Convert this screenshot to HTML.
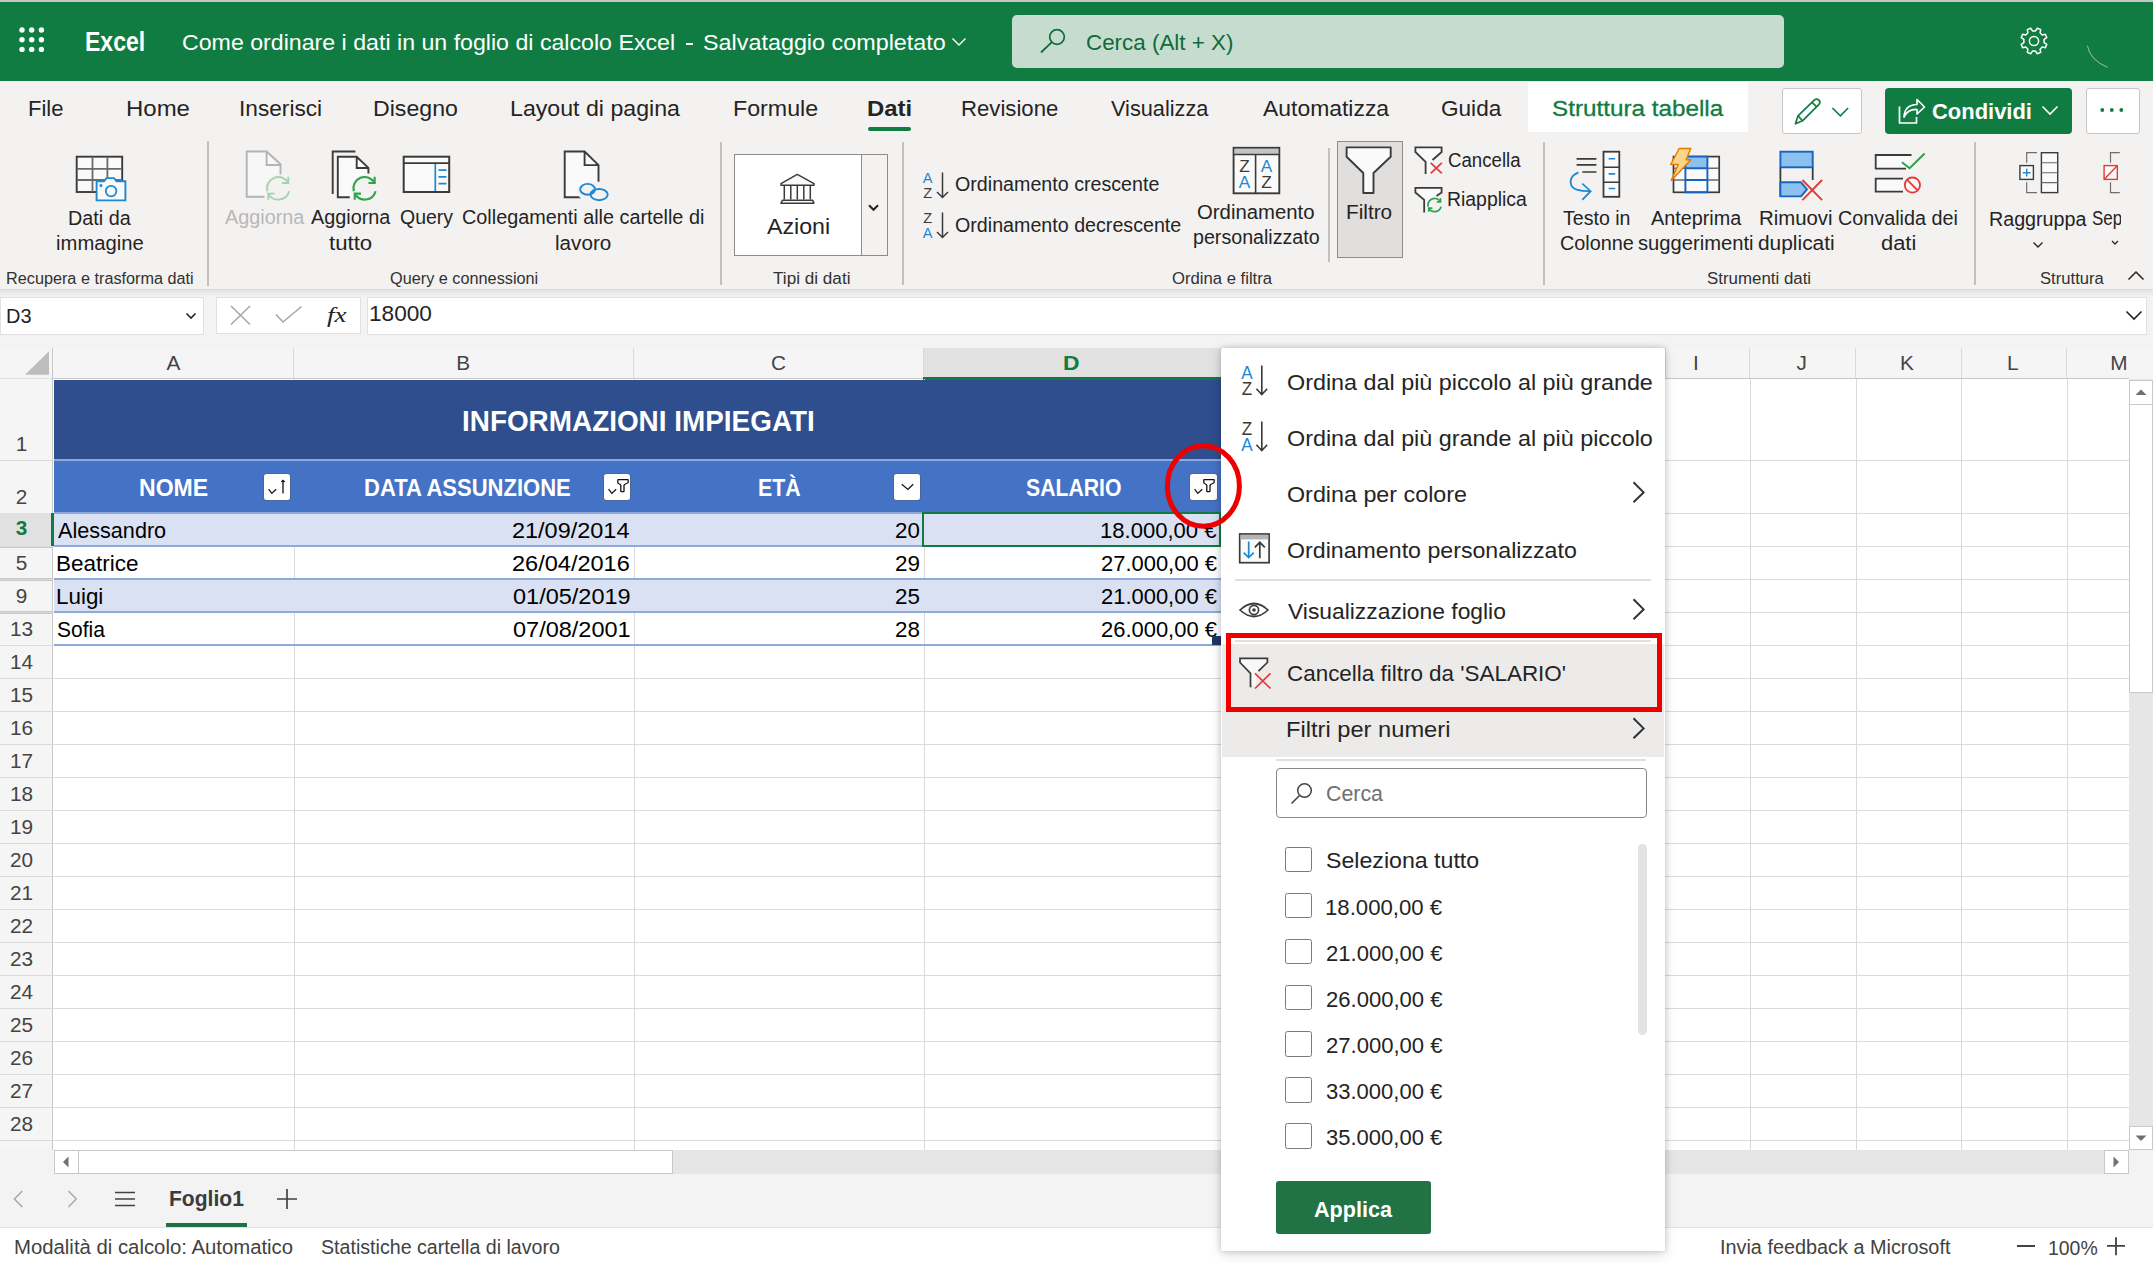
<!DOCTYPE html>
<html><head><meta charset="utf-8"><title>Excel</title>
<style>
html,body{margin:0;padding:0;}
body{width:2153px;height:1263px;overflow:hidden;position:relative;background:#f3f2f1;font-family:"Liberation Sans",sans-serif;}
.b{position:absolute;display:block;}
.t{position:absolute;white-space:nowrap;transform-origin:0 0;font-family:"Liberation Sans",sans-serif;}
</style></head><body>
<div class="b" style="left:0px;top:0px;width:2153px;height:2px;background:#c6c6c6;"></div>
<div class="b" style="left:0px;top:2px;width:2153px;height:79px;background:#107c41;"></div>
<svg class="b" style="left:16px;top:24.4px;" width="32" height="32" viewBox="0 0 32 32"><circle cx="6" cy="6" r="2.7" fill="#fff"/><circle cx="6" cy="15.7" r="2.7" fill="#fff"/><circle cx="6" cy="25.4" r="2.7" fill="#fff"/><circle cx="15.7" cy="6" r="2.7" fill="#fff"/><circle cx="15.7" cy="15.7" r="2.7" fill="#fff"/><circle cx="15.7" cy="25.4" r="2.7" fill="#fff"/><circle cx="25.4" cy="6" r="2.7" fill="#fff"/><circle cx="25.4" cy="15.7" r="2.7" fill="#fff"/><circle cx="25.4" cy="25.4" r="2.7" fill="#fff"/></svg>
<div class="t" style="left:85.46px;top:29.22px;font-size:26.89px;line-height:26.89px;color:#fff;font-weight:700;transform:scaleX(0.8565);font-family:'Liberation Sans', sans-serif;">Excel</div>
<div class="t" style="left:181.82px;top:32.04px;font-size:22.38px;line-height:22.38px;color:#fff;transform:scaleX(1.0351);font-family:'Liberation Sans', sans-serif;">Come ordinare i dati in un foglio di calcolo Excel</div>
<div class="b" style="left:686px;top:43.3px;width:7px;height:1.5px;background:#fff;"></div>
<div class="t" style="left:703.13px;top:32.04px;font-size:22.38px;line-height:22.38px;color:#fff;transform:scaleX(1.0437);font-family:'Liberation Sans', sans-serif;">Salvataggio completato</div>
<svg class="b" style="left:950px;top:36px;" width="18" height="12" viewBox="0 0 18 12"><path d="M2.5 2.5 L9 9 L15.5 2.5" stroke="#fff" stroke-width="1.4" fill="none"/></svg>
<div class="b" style="left:1012px;top:15px;width:772px;height:53px;background:#c6dccf;border-radius:5px;"></div>
<svg class="b" style="left:1036px;top:25px;" width="32" height="32" viewBox="0 0 32 32"><circle cx="21" cy="12" r="7.3" stroke="#0e6e3a" stroke-width="1.7" fill="none"/><path d="M15.8 17.2 L5 27.5" stroke="#0e6e3a" stroke-width="1.8" fill="none"/></svg>
<div class="t" style="left:1085.86px;top:32.58px;font-size:21.51px;line-height:21.51px;color:#0f6b39;transform:scaleX(1.0415);font-family:'Liberation Sans', sans-serif;">Cerca (Alt + X)</div>
<svg class="b" style="left:2018px;top:25px;" width="32" height="32" viewBox="0 0 32 32"><path d="M17.51 5.91 L19.31 3.22 L22.70 4.63 L22.07 7.80 L24.20 9.93 L27.37 9.30 L28.78 12.69 L26.09 14.49 L26.09 17.51 L28.78 19.31 L27.37 22.70 L24.20 22.07 L22.07 24.20 L22.70 27.37 L19.31 28.78 L17.51 26.09 L14.49 26.09 L12.69 28.78 L9.30 27.37 L9.93 24.20 L7.80 22.07 L4.63 22.70 L3.22 19.31 L5.91 17.51 L5.91 14.49 L3.22 12.69 L4.63 9.30 L7.80 9.93 L9.93 7.80 L9.30 4.63 L12.69 3.22 L14.49 5.91 Z" fill="none" stroke="#fff" stroke-width="1.5" stroke-linejoin="round"/><circle cx="16" cy="16" r="4.6" fill="none" stroke="#fff" stroke-width="1.5"/></svg>
<svg class="b" style="left:2080px;top:30px;" width="40" height="45" viewBox="0 0 40 45"><path d="M7.4 15.7 Q10 30 27.6 37.4" stroke="#ffffff" stroke-width="1" fill="none" opacity="0.55"/></svg>
<div class="b" style="left:0px;top:81px;width:2153px;height:60px;background:#f3f2f1;"></div>
<div class="t" style="left:28.19px;top:96.85px;font-size:22.97px;line-height:22.97px;color:#242424;transform:scaleX(0.9589);font-family:'Liberation Sans', sans-serif;">File</div>
<div class="t" style="left:125.73px;top:96.85px;font-size:22.97px;line-height:22.97px;color:#242424;transform:scaleX(1.0436);font-family:'Liberation Sans', sans-serif;">Home</div>
<div class="t" style="left:239.42px;top:96.85px;font-size:22.97px;line-height:22.97px;color:#242424;transform:scaleX(0.9868);font-family:'Liberation Sans', sans-serif;">Inserisci</div>
<div class="t" style="left:373.10px;top:96.85px;font-size:22.97px;line-height:22.97px;color:#242424;transform:scaleX(1.0072);font-family:'Liberation Sans', sans-serif;">Disegno</div>
<div class="t" style="left:510.10px;top:96.85px;font-size:22.97px;line-height:22.97px;color:#242424;transform:scaleX(1.0081);font-family:'Liberation Sans', sans-serif;">Layout di pagina</div>
<div class="t" style="left:732.60px;top:96.85px;font-size:22.97px;line-height:22.97px;color:#242424;transform:scaleX(1.0108);font-family:'Liberation Sans', sans-serif;">Formule</div>
<div class="t" style="left:961.18px;top:96.85px;font-size:22.97px;line-height:22.97px;color:#242424;transform:scaleX(0.9648);font-family:'Liberation Sans', sans-serif;">Revisione</div>
<div class="t" style="left:1111.49px;top:96.85px;font-size:22.97px;line-height:22.97px;color:#242424;transform:scaleX(0.9459);font-family:'Liberation Sans', sans-serif;">Visualizza</div>
<div class="t" style="left:1262.95px;top:96.85px;font-size:22.97px;line-height:22.97px;color:#242424;transform:scaleX(0.9976);font-family:'Liberation Sans', sans-serif;">Automatizza</div>
<div class="t" style="left:1441.47px;top:96.85px;font-size:22.97px;line-height:22.97px;color:#242424;transform:scaleX(0.9830);font-family:'Liberation Sans', sans-serif;">Guida</div>
<div class="t" style="left:867.20px;top:96.85px;font-size:22.97px;line-height:22.97px;color:#242424;font-weight:700;transform:scaleX(1.0395);font-family:'Liberation Sans', sans-serif;">Dati</div>
<div class="b" style="left:868px;top:127px;width:43px;height:4px;background:#107c41;border-radius:2px;"></div>
<div class="b" style="left:1528px;top:82px;width:220px;height:50px;background:#ffffff;"></div>
<div class="t" style="left:1551.68px;top:96.85px;font-size:22.97px;line-height:22.97px;color:#107c41;transform:scaleX(1.0555);font-family:'Liberation Sans', sans-serif;-webkit-text-stroke:0.3px #107c41;">Struttura tabella</div>
<div class="b" style="left:1781.5px;top:88px;width:80.5px;height:46px;background:#fff;border:1px solid #c8c6c4;border-radius:3px;box-sizing:border-box;"></div>
<svg class="b" style="left:1790px;top:96px;" width="64" height="32" viewBox="0 0 64 32"><g fill="none" stroke="#107c41" stroke-width="1.7" stroke-linejoin="round"><path d="M5.5 27.8 L8 19.8 L24.5 3.8 Q27 2.1 29 4.1 Q30.8 6.1 29 8.3 L12.5 24.8 Z"/><path d="M8 19.8 L12.5 24.8 M22 6.3 L26.8 10.9"/></g><path d="M42.4 12 L50.4 19.9 L58.1 12" stroke="#107c41" stroke-width="1.6" fill="none"/></svg>
<div class="b" style="left:1885px;top:88px;width:187px;height:46px;background:#107c41;border-radius:4px;"></div>
<svg class="b" style="left:1893.5px;top:94.8px;" width="36" height="34" viewBox="0 0 36 34"><g fill="none" stroke="#fff" stroke-width="1.7" stroke-linejoin="round"><path d="M5.5 11.5 L5.5 28 L22.5 28 L22.5 22"/><path d="M10 22 Q10.5 10 23 9.5 L23 4.5 L30.5 12 L23 19 L23 14.5 Q14 14 10 22 Z"/></g></svg>
<div class="t" style="left:1931.60px;top:100.64px;font-size:22.38px;line-height:22.38px;color:#fff;font-weight:700;transform:scaleX(0.9804);font-family:'Liberation Sans', sans-serif;">Condividi</div>
<svg class="b" style="left:2038px;top:100px;" width="24" height="20" viewBox="0 0 24 20"><path d="M4.5 6.5 L12 14 L19.5 6.5" stroke="#fff" stroke-width="1.6" fill="none"/></svg>
<div class="b" style="left:2085.5px;top:88px;width:54.5px;height:46px;background:#fff;border:1px solid #c8c6c4;border-radius:3px;box-sizing:border-box;"></div>
<svg class="b" style="left:2095px;top:104px;" width="36" height="12" viewBox="0 0 36 12"><circle cx="7.3" cy="6" r="1.9" fill="#107c41"/><circle cx="16.8" cy="6" r="1.9" fill="#107c41"/><circle cx="26.3" cy="6" r="1.9" fill="#107c41"/></svg>
<div class="b" style="left:0px;top:141px;width:2153px;height:148px;background:#f3f2f1;"></div>
<div class="b" style="left:0px;top:289px;width:2153px;height:1px;background:#dcdad8;"></div>
<div class="b" style="left:0px;top:290px;width:2153px;height:7px;background:transparent;background:linear-gradient(rgba(0,0,0,0.07),rgba(0,0,0,0));z-index:5;"></div>
<div class="b" style="left:206.8px;top:141px;width:1.799999999999983px;height:145px;background:#c3c1bf;"></div>
<div class="b" style="left:719.8px;top:142px;width:1.8000000000000682px;height:143px;background:#c3c1bf;"></div>
<div class="b" style="left:901.8px;top:142px;width:1.8000000000000682px;height:143px;background:#c3c1bf;"></div>
<div class="b" style="left:1542.8px;top:142px;width:1.7999999999999545px;height:143px;background:#c3c1bf;"></div>
<div class="b" style="left:1973.8px;top:142px;width:1.7999999999999545px;height:143px;background:#c3c1bf;"></div>
<div class="b" style="left:1328.3px;top:148px;width:1.7999999999999545px;height:114px;background:#c3c1bf;"></div>
<div class="t" style="left:6.17px;top:269.59px;font-size:16.42px;line-height:16.42px;color:#323130;transform:scaleX(0.9897);font-family:'Liberation Sans', sans-serif;">Recupera e trasforma dati</div>
<div class="t" style="left:389.74px;top:269.59px;font-size:16.42px;line-height:16.42px;color:#323130;transform:scaleX(0.9909);font-family:'Liberation Sans', sans-serif;">Query e connessioni</div>
<div class="t" style="left:772.62px;top:269.59px;font-size:16.42px;line-height:16.42px;color:#323130;transform:scaleX(1.0443);font-family:'Liberation Sans', sans-serif;">Tipi di dati</div>
<div class="t" style="left:1172.22px;top:269.59px;font-size:16.42px;line-height:16.42px;color:#323130;transform:scaleX(1.0163);font-family:'Liberation Sans', sans-serif;">Ordina e filtra</div>
<div class="t" style="left:1706.92px;top:269.59px;font-size:16.42px;line-height:16.42px;color:#323130;transform:scaleX(1.0285);font-family:'Liberation Sans', sans-serif;">Strumenti dati</div>
<div class="t" style="left:2039.63px;top:269.59px;font-size:16.42px;line-height:16.42px;color:#323130;transform:scaleX(1.0139);font-family:'Liberation Sans', sans-serif;">Struttura</div>
<svg class="b" style="left:2124px;top:266px;" width="24" height="20" viewBox="0 0 24 20"><path d="M4.5 13.5 L12 6 L19.5 13.5" stroke="#242424" stroke-width="1.5" fill="none"/></svg>
<div class="b" style="left:734px;top:154px;width:154px;height:102px;background:#ffffff;border:1px solid #8f8d8b;box-sizing:border-box;"></div>
<div class="b" style="left:861.5px;top:155px;width:25.5px;height:100px;background:#f3f2f1;"></div>
<div class="b" style="left:860.8px;top:155px;width:1.400000000000091px;height:100px;background:#8f8d8b;"></div>
<svg class="b" style="left:864px;top:199px;" width="18" height="18" viewBox="0 0 18 18"><path d="M5 6.3 L9.5 10.8 L14 6.3" stroke="#242424" stroke-width="2" fill="none"/></svg>
<div class="b" style="left:1337px;top:141px;width:66px;height:117px;background:#e1dfdd;border:1px solid #8f8d8b;box-sizing:border-box;"></div>
<svg class="b" style="left:0px;top:0px;" width="2153" height="300" viewBox="0 0 2153 300"><rect x="76.7" y="156.7" width="45.5" height="35.3" fill="#fafafa" stroke="#3b3b3b" stroke-width="1.9"/><path d="M92.5 157 V192 M107.4 157 V192 M77 168.8 H122 M77 180 H122" stroke="#6a6a6a" stroke-width="1.8"/><path d="M96.6 181.2 H104 L106.5 178.1 H114 L116.5 181.2 H125.4 V200.4 H96.6 Z" fill="#fafafa" stroke="#1e88d4" stroke-width="1.9"/><circle cx="111.1" cy="191.1" r="5.3" fill="none" stroke="#1e88d4" stroke-width="1.8"/><rect x="99.6" y="184.2" width="2.7" height="2.7" fill="#1e88d4"/><path d="M246.7 151.5 H266.6 L280.5 164.2 V196.7 H246.7 Z" fill="#f7f7f7"/><path d="M264.4 196.7 H246.7 V151.5 H266.6 L280.5 164.2 V174.4 M266.6 151.5 V165 H280.5" stroke="#b3b3b3" stroke-width="1.9" fill="none"/><circle cx="278.3" cy="188.3" r="13.5" fill="#f3f2f1"/><path d="M267.39 191.22 A11.3 11.3 0 0 1 288.28 182.99" stroke="#a3d4b0" stroke-width="1.9" fill="none"/><path d="M289.21 191.22 A11.3 11.3 0 0 1 268.32 193.61" stroke="#a3d4b0" stroke-width="1.9" fill="none"/><path d="M288.28 176.78 V182.99 H282.06" stroke="#a3d4b0" stroke-width="1.9" fill="none"/><path d="M268.32 199.82 V193.61 H274.54" stroke="#a3d4b0" stroke-width="1.9" fill="none"/><path d="M332.7 193.9 V151.5 H355.4" stroke="#3b3b3b" stroke-width="1.9" fill="none"/><path d="M337.8 156.7 H356.7 L368.4 167.9 V197.2 H337.8 Z" fill="#fafafa"/><path d="M349.8 197.2 H337.8 V156.7 H356.7 L368.4 167.9 V173.4 M356.7 156.7 V168 H368.4" stroke="#3b3b3b" stroke-width="1.9" fill="none"/><circle cx="364.7" cy="188.3" r="13.5" fill="#f3f2f1"/><path d="M353.79 191.22 A11.3 11.3 0 0 1 374.68 182.99" stroke="#2da44e" stroke-width="2.1" fill="none"/><path d="M375.61 191.22 A11.3 11.3 0 0 1 354.72 193.61" stroke="#2da44e" stroke-width="2.1" fill="none"/><path d="M374.68 176.78 V182.99 H368.46" stroke="#2da44e" stroke-width="2.1" fill="none"/><path d="M354.72 199.82 V193.61 H360.94" stroke="#2da44e" stroke-width="2.1" fill="none"/><rect x="403.7" y="156.7" width="45.5" height="35.3" fill="#fafafa" stroke="#3b3b3b" stroke-width="2"/><path d="M404 163.2 H449" stroke="#3b3b3b" stroke-width="1.7"/><path d="M435.3 164 V191 M438.5 170.1 H446.5 M438.5 176.8 H446.5 M438.5 183.7 H446.5" stroke="#1e88d4" stroke-width="1.7"/><path d="M564.7 151.5 H584.6 L598.5 165.1 V197.2 H564.7 Z" fill="#fafafa"/><path d="M580.9 197.2 H564.7 V151.5 H584.6 L598.5 165.1 V181.8 M584.6 151.5 V165.1 H598.5" stroke="#3b3b3b" stroke-width="1.9" fill="none"/><ellipse cx="592" cy="191.5" rx="15" ry="10" fill="#f3f2f1"/><ellipse cx="587.6" cy="189.3" rx="7.4" ry="5.4" fill="none" stroke="#1e88d4" stroke-width="1.9"/><ellipse cx="599.1" cy="194.6" rx="8.6" ry="5.6" fill="none" stroke="#1e88d4" stroke-width="1.9"/><g stroke="#3b3b3b" stroke-width="1.5" fill="#fafafa" stroke-linejoin="round"><path d="M781 183.7 L797.3 174.4 L814 183.7 V185.3 H781 Z"/><path d="M784.3 185.5 V199.5 M790.8 185.5 V199.5 M797.3 185.5 V199.5 M803.8 185.5 V199.5 M810.3 185.5 V199.5"/><path d="M782.5 200.2 H812.5 L814 203.2 H781 Z"/></g><text x="927.6" y="182.7" font-family="Liberation Sans" font-size="14.6" fill="#1e88d4" text-anchor="middle">A</text><text x="927.6" y="197.6" font-family="Liberation Sans" font-size="14.6" fill="#3b3b3b" text-anchor="middle">Z</text><path d="M942.5 172.5 V197.5 M937 192.0 L942.5 197.5 L948 192.0" stroke="#3b3b3b" stroke-width="1.5" fill="none"/><text x="927.6" y="222.7" font-family="Liberation Sans" font-size="14.6" fill="#3b3b3b" text-anchor="middle">Z</text><text x="927.6" y="237.6" font-family="Liberation Sans" font-size="14.6" fill="#1e88d4" text-anchor="middle">A</text><path d="M942.5 212.5 V237.5 M937 232.0 L942.5 237.5 L948 232.0" stroke="#3b3b3b" stroke-width="1.5" fill="none"/><rect x="1233.6" y="147.8" width="45.7" height="45.5" fill="#fafafa" stroke="#3b3b3b" stroke-width="1.9"/><rect x="1234.6" y="148.8" width="43.7" height="5.4" fill="#c4c4c4"/><path d="M1234 154.5 H1279 M1255.6 154.5 V193" stroke="#3b3b3b" stroke-width="1.6"/><text x="1244.4" y="171.6" font-family="Liberation Sans" font-size="17.2" fill="#3b3b3b" text-anchor="middle">Z</text><text x="1244.4" y="188.3" font-family="Liberation Sans" font-size="17.2" fill="#1e88d4" text-anchor="middle">A</text><text x="1266.6" y="171.6" font-family="Liberation Sans" font-size="17.2" fill="#1e88d4" text-anchor="middle">A</text><text x="1266.6" y="188.3" font-family="Liberation Sans" font-size="17.2" fill="#3b3b3b" text-anchor="middle">Z</text><path d="M1346.6 147.4 H1390.7 V156.7 L1373.5 173 V193 H1363.3 V173 L1346.6 156.7 Z" fill="#fafafa" stroke="#3b3b3b" stroke-width="1.9" stroke-linejoin="round"/><path d="M1415.4 147.4 H1441.6 V152 L1432 161 V174 H1425.6 V161.8 L1415.4 152 Z" fill="#fafafa"/><path d="M1432.5 160 L1441.6 152 V147.4 H1415.4 V152 L1425.6 161.8 V173.9" stroke="#3b3b3b" stroke-width="1.8" fill="none"/><path d="M1430.7 162.8 L1441.8 173.4 M1441.8 162.8 L1430.7 173.4" stroke="#e8363b" stroke-width="1.7"/><path d="M1415.4 187.8 H1441.6 V192.5 L1432 200 V212.5 H1424.2 V199.9 L1415.4 192.5 Z" fill="#fafafa"/><path d="M1436.5 196 L1441.6 192.5 V187.8 H1415.4 V192.5 L1424.2 199.9 V212.5" stroke="#3b3b3b" stroke-width="1.8" fill="none"/><path d="M1428.22 206.71 A6.6 6.6 0 0 1 1440.43 201.90" stroke="#2da44e" stroke-width="1.8" fill="none"/><path d="M1440.98 206.71 A6.6 6.6 0 0 1 1428.77 208.10" stroke="#2da44e" stroke-width="1.8" fill="none"/><path d="M1440.43 198.27 V201.90 H1436.80" stroke="#2da44e" stroke-width="1.8" fill="none"/><path d="M1428.77 211.73 V208.10 H1432.40" stroke="#2da44e" stroke-width="1.8" fill="none"/><path d="M1576.6 158.8 H1596.4 M1576.6 164.8 H1596.4 M1582.3 172 H1596.4" stroke="#3b3b3b" stroke-width="1.7"/><rect x="1603.5" y="151.7" width="15.8" height="45.1" fill="#fafafa" stroke="#3b3b3b" stroke-width="1.8"/><path d="M1603.5 167.3 H1619.3 M1603.5 182.3 H1619.3" stroke="#3b3b3b" stroke-width="1.6"/><path d="M1608.6 158.8 H1615.2 M1608.6 173.9 H1615.2 M1608.6 188.5 H1615.2" stroke="#1e88d4" stroke-width="1.6"/><path d="M1578.5 172.4 Q1568 177 1571.5 186 Q1575 191.5 1590.5 191.2 M1582.3 183.6 L1590.7 191.2 L1582.3 199.8" stroke="#1e88d4" stroke-width="1.7" fill="none"/><rect x="1673.5" y="156.6" width="45.7" height="35.7" fill="#fafafa" stroke="#3b3b3b" stroke-width="1.7"/><path d="M1674 168.2 H1719 M1674 180 H1719" stroke="#6a6a6a" stroke-width="1.6"/><rect x="1685.4" y="156.6" width="22" height="11.6" fill="#8cc1ee"/><rect x="1685.4" y="156.6" width="22" height="35.7" fill="none" stroke="#1565c0" stroke-width="1.9"/><path d="M1685.4 168.2 H1707.4 M1685.4 180 H1707.4" stroke="#1565c0" stroke-width="1.9"/><path d="M1679.2 148.5 H1690.8 L1686.1 159.8 H1690.8 L1671.3 180.4 L1678.2 164.5 H1670.7 Z" fill="#fad58a" stroke="#e07b00" stroke-width="1.4" stroke-linejoin="round"/><path d="M1780.4 167.3 V196.4 M1812.7 167.3 V180" stroke="#3b3b3b" stroke-width="1.8"/><rect x="1780.4" y="151.7" width="32.3" height="15.6" fill="#8cc1ee" stroke="#1565c0" stroke-width="1.9"/><path d="M1780.4 182.3 H1801 L1807 189.3 L1801 196.4 H1780.4 Z" fill="#8cc1ee" stroke="#1565c0" stroke-width="1.9" stroke-linejoin="round"/><path d="M1802.4 180 L1822.1 200.2 M1822.1 180 L1802.4 200.2" stroke="#e53935" stroke-width="1.9"/><path d="M1911.5 155 H1875.7 V168.6 H1906" stroke="#3b3b3b" stroke-width="1.8" fill="#fafafa"/><path d="M1903 178.6 H1875.7 V191.7 H1903" stroke="#3b3b3b" stroke-width="1.8" fill="#fafafa"/><path d="M1902 162.2 L1909.6 168.2 L1924.6 153.5" stroke="#2e9e44" stroke-width="1.9" fill="none"/><circle cx="1912.4" cy="185.1" r="7.6" fill="#fafafa" stroke="#e53935" stroke-width="1.8"/><path d="M1907 179.7 L1917.8 190.5" stroke="#e53935" stroke-width="1.8"/><path d="M2037 152.7 H2026.7 V162.7 M2026.7 182.3 V192.6 H2037" stroke="#6e6e6e" stroke-width="1.2" fill="none"/><rect x="2019.9" y="165.6" width="13.5" height="13.8" fill="#fafafa" stroke="#3b3b3b" stroke-width="1.4"/><path d="M2026.7 168.8 V176.6 M2022.8 172.7 H2030.6" stroke="#1e88d4" stroke-width="1.4"/><rect x="2041.4" y="152.7" width="16.3" height="39.9" fill="#fafafa" stroke="#3b3b3b" stroke-width="1.4"/><path d="M2041.4 162.7 H2057.7 M2041.4 172.7 H2057.7 M2041.4 182.6 H2057.7" stroke="#6a6a6a" stroke-width="1.1"/><path d="M2119.8 152.7 H2110.5 V162.7 M2110.5 182.3 V192.6 H2119.8" stroke="#6e6e6e" stroke-width="1.2" fill="none"/><rect x="2104.1" y="165.6" width="13.2" height="13.8" fill="#fafafa" stroke="#e53935" stroke-width="1.4"/><path d="M2104.5 179 L2117 166" stroke="#e53935" stroke-width="1.4"/></svg>
<div class="t" style="left:67.78px;top:208.63px;font-size:19.33px;line-height:19.33px;color:#242424;transform:scaleX(1.0225);font-family:'Liberation Sans', sans-serif;">Dati da</div>
<div class="t" style="left:56.04px;top:234.13px;font-size:19.33px;line-height:19.33px;color:#242424;transform:scaleX(1.0483);font-family:'Liberation Sans', sans-serif;">immagine</div>
<div class="t" style="left:224.66px;top:208.13px;font-size:19.33px;line-height:19.33px;color:#b8b8b8;transform:scaleX(1.0253);font-family:'Liberation Sans', sans-serif;">Aggiorna</div>
<div class="t" style="left:310.66px;top:208.13px;font-size:19.33px;line-height:19.33px;color:#242424;transform:scaleX(1.0253);font-family:'Liberation Sans', sans-serif;">Aggiorna</div>
<div class="t" style="left:329.27px;top:233.63px;font-size:19.33px;line-height:19.33px;color:#242424;transform:scaleX(1.1474);font-family:'Liberation Sans', sans-serif;">tutto</div>
<div class="t" style="left:399.78px;top:208.13px;font-size:19.33px;line-height:19.33px;color:#242424;transform:scaleX(1.0079);font-family:'Liberation Sans', sans-serif;">Query</div>
<div class="t" style="left:461.99px;top:208.13px;font-size:19.33px;line-height:19.33px;color:#242424;transform:scaleX(1.0252);font-family:'Liberation Sans', sans-serif;">Collegamenti alle cartelle di</div>
<div class="t" style="left:554.62px;top:233.63px;font-size:19.33px;line-height:19.33px;color:#242424;transform:scaleX(1.0682);font-family:'Liberation Sans', sans-serif;">lavoro</div>
<div class="t" style="left:766.95px;top:214.55px;font-size:22.97px;line-height:22.97px;color:#242424;transform:scaleX(1.0090);font-family:'Liberation Sans', sans-serif;">Azioni</div>
<div class="t" style="left:955.08px;top:175.26px;font-size:19.77px;line-height:19.77px;color:#242424;transform:scaleX(0.9948);font-family:'Liberation Sans', sans-serif;">Ordinamento crescente</div>
<div class="t" style="left:955.08px;top:215.66px;font-size:19.77px;line-height:19.77px;color:#242424;transform:scaleX(0.9949);font-family:'Liberation Sans', sans-serif;">Ordinamento decrescente</div>
<div class="t" style="left:1197.04px;top:202.63px;font-size:19.33px;line-height:19.33px;color:#242424;transform:scaleX(1.0515);font-family:'Liberation Sans', sans-serif;">Ordinamento</div>
<div class="t" style="left:1192.74px;top:227.63px;font-size:19.33px;line-height:19.33px;color:#242424;transform:scaleX(1.0163);font-family:'Liberation Sans', sans-serif;">personalizzato</div>
<div class="t" style="left:1346.30px;top:203.43px;font-size:19.33px;line-height:19.33px;color:#242424;transform:scaleX(1.0750);font-family:'Liberation Sans', sans-serif;">Filtro</div>
<div class="t" style="left:1447.85px;top:151.13px;font-size:19.33px;line-height:19.33px;color:#242424;transform:scaleX(0.9645);font-family:'Liberation Sans', sans-serif;">Cancella</div>
<div class="t" style="left:1447.21px;top:189.83px;font-size:19.33px;line-height:19.33px;color:#242424;transform:scaleX(1.0035);font-family:'Liberation Sans', sans-serif;">Riapplica</div>
<div class="t" style="left:1563.27px;top:208.63px;font-size:19.33px;line-height:19.33px;color:#242424;transform:scaleX(1.0133);font-family:'Liberation Sans', sans-serif;">Testo in</div>
<div class="t" style="left:1559.59px;top:234.13px;font-size:19.33px;line-height:19.33px;color:#242424;transform:scaleX(1.0260);font-family:'Liberation Sans', sans-serif;">Colonne</div>
<div class="t" style="left:1650.76px;top:208.63px;font-size:19.33px;line-height:19.33px;color:#242424;transform:scaleX(1.0241);font-family:'Liberation Sans', sans-serif;">Anteprima</div>
<div class="t" style="left:1638.44px;top:234.13px;font-size:19.33px;line-height:19.33px;color:#242424;transform:scaleX(1.0438);font-family:'Liberation Sans', sans-serif;">suggerimenti</div>
<div class="t" style="left:1759.33px;top:208.63px;font-size:19.33px;line-height:19.33px;color:#242424;transform:scaleX(1.0531);font-family:'Liberation Sans', sans-serif;">Rimuovi</div>
<div class="t" style="left:1758.12px;top:234.13px;font-size:19.33px;line-height:19.33px;color:#242424;transform:scaleX(1.0811);font-family:'Liberation Sans', sans-serif;">duplicati</div>
<div class="t" style="left:1837.99px;top:208.63px;font-size:19.33px;line-height:19.33px;color:#242424;transform:scaleX(1.0231);font-family:'Liberation Sans', sans-serif;">Convalida dei</div>
<div class="t" style="left:1880.88px;top:234.13px;font-size:19.33px;line-height:19.33px;color:#242424;transform:scaleX(1.1323);font-family:'Liberation Sans', sans-serif;">dati</div>
<div class="t" style="left:1989.39px;top:210.33px;font-size:19.33px;line-height:19.33px;color:#242424;transform:scaleX(1.0184);font-family:'Liberation Sans', sans-serif;">Raggruppa</div>
<svg class="b" style="left:2030px;top:238px;" width="16" height="14" viewBox="0 0 16 14"><path d="M3.5 4.5 L8 9 L12.5 4.5" stroke="#242424" stroke-width="1.4" fill="none"/></svg>
<div class="b" style="left:2090px;top:146px;width:30.5px;height:130px;overflow:hidden;"><div class="t" style="left:2.11px;top:62.63px;font-size:19.33px;line-height:19.33px;color:#242424;transform:scaleX(1.0000);font-family:'Liberation Sans', sans-serif;transform:scaleX(0.88);">Separa</div><svg class="b" style="left:20px;top:92px;" width="10" height="10" viewBox="0 0 10 10"><path d="M2 3 L5 6 L8 3" stroke="#242424" stroke-width="1.3" fill="none"/></svg></div>
<div class="b" style="left:2121px;top:146px;width:32px;height:54px;background:#f3f2f1;"></div>
<div class="b" style="left:0px;top:290px;width:2153px;height:58px;background:#f3f3f3;"></div>
<div class="b" style="left:0px;top:296.5px;width:204px;height:38.0px;background:#fff;border:1px solid #e1e1e1;box-sizing:border-box;"></div>
<div class="t" style="left:6.16px;top:305.90px;font-size:20.78px;line-height:20.78px;color:#242424;transform:scaleX(0.9606);font-family:'Liberation Sans', sans-serif;">D3</div>
<svg class="b" style="left:182px;top:308px;" width="18" height="16" viewBox="0 0 18 16"><path d="M4.5 5.5 L9 10 L13.5 5.5" stroke="#242424" stroke-width="1.6" fill="none"/></svg>
<div class="b" style="left:216px;top:296.5px;width:145px;height:37.5px;background:#fff;border:1px solid #e1e1e1;box-sizing:border-box;"></div>
<svg class="b" style="left:226px;top:302px;" width="30" height="28" viewBox="0 0 30 28"><path d="M5 4 L24 22.5 M24 4 L5 22.5" stroke="#a8a8a8" stroke-width="1.6"/></svg>
<svg class="b" style="left:272px;top:302px;" width="34" height="26" viewBox="0 0 34 26"><path d="M4 12.5 L11 20 L29.5 4.5" stroke="#a8a8a8" stroke-width="1.6" fill="none"/></svg>
<div class="t" style="left:326.70px;top:305.01px;font-size:20.06px;line-height:20.06px;color:#242424;font-style:italic;transform:scaleX(1.3455);font-family:'Liberation Serif', serif;">fx</div>
<div class="b" style="left:366.5px;top:296.5px;width:1780.0px;height:38.0px;background:#fff;border:1px solid #e1e1e1;box-sizing:border-box;"></div>
<div class="t" style="left:369.28px;top:303.58px;font-size:21.51px;line-height:21.51px;color:#242424;transform:scaleX(1.0532);font-family:'Liberation Sans', sans-serif;">18000</div>
<svg class="b" style="left:2122px;top:306px;" width="24" height="18" viewBox="0 0 24 18"><path d="M4.5 5.5 L12 13 L19.5 5.5" stroke="#242424" stroke-width="1.6" fill="none"/></svg>
<div class="b" style="left:0px;top:348px;width:2153px;height:31px;background:#f5f5f5;"></div>
<div class="b" style="left:0px;top:379px;width:53px;height:771px;background:#f5f5f5;"></div>
<div class="b" style="left:53px;top:379px;width:2076px;height:771px;background:#ffffff;"></div>
<svg class="b" style="left:22px;top:349px;" width="30" height="28" viewBox="0 0 30 28"><path d="M3 25.8 L27 2.3 V25.8 Z" fill="#bdbdbd"/></svg>
<div class="b" style="left:923px;top:348px;width:298px;height:31px;background:#e1e1e1;"></div>
<div class="b" style="left:293.4px;top:348px;width:1.0px;height:31px;background:#dadada;"></div>
<div class="b" style="left:633.4px;top:348px;width:1.0px;height:31px;background:#dadada;"></div>
<div class="b" style="left:923px;top:348px;width:1px;height:31px;background:#dadada;"></div>
<div class="b" style="left:1221px;top:348px;width:1px;height:31px;background:#dadada;"></div>
<div class="b" style="left:1400px;top:348px;width:1px;height:31px;background:#dadada;"></div>
<div class="b" style="left:1550px;top:348px;width:1px;height:31px;background:#dadada;"></div>
<div class="b" style="left:1665px;top:348px;width:1px;height:31px;background:#dadada;"></div>
<div class="b" style="left:1748.7px;top:348px;width:1.0px;height:31px;background:#dadada;"></div>
<div class="b" style="left:1855px;top:348px;width:1px;height:31px;background:#dadada;"></div>
<div class="b" style="left:1960.5px;top:348px;width:1.0px;height:31px;background:#dadada;"></div>
<div class="b" style="left:2066px;top:348px;width:1px;height:31px;background:#dadada;"></div>
<div class="b" style="left:2200px;top:348px;width:1px;height:31px;background:#dadada;"></div>
<div class="b" style="left:53px;top:378px;width:2076px;height:1px;background:#c8c8c8;"></div>
<div class="b" style="left:0px;top:378px;width:53px;height:1px;background:#e0e0e0;"></div>
<div class="b" style="left:923px;top:377px;width:298px;height:3px;background:#107c41;"></div>
<div class="b" style="left:52px;top:348px;width:1px;height:802px;background:#c8c8c8;"></div>
<div class="t" style="left:166.46px;top:352.70px;font-size:20.78px;line-height:20.78px;color:#444;transform:scaleX(1.0000);font-family:'Liberation Sans', sans-serif;text-align:center;width:12px;transform:none;">A</div>
<div class="t" style="left:456.30px;top:352.70px;font-size:20.78px;line-height:20.78px;color:#444;transform:scaleX(1.0000);font-family:'Liberation Sans', sans-serif;text-align:center;width:12px;transform:none;">B</div>
<div class="t" style="left:770.94px;top:352.70px;font-size:20.78px;line-height:20.78px;color:#444;transform:scaleX(1.0000);font-family:'Liberation Sans', sans-serif;text-align:center;width:12px;transform:none;">C</div>
<div class="t" style="left:1689.79px;top:352.70px;font-size:20.78px;line-height:20.78px;color:#444;transform:scaleX(1.0000);font-family:'Liberation Sans', sans-serif;text-align:center;width:12px;transform:none;">I</div>
<div class="t" style="left:1795.67px;top:352.70px;font-size:20.78px;line-height:20.78px;color:#444;transform:scaleX(1.0000);font-family:'Liberation Sans', sans-serif;text-align:center;width:12px;transform:none;">J</div>
<div class="t" style="left:1899.90px;top:352.70px;font-size:20.78px;line-height:20.78px;color:#444;transform:scaleX(1.0000);font-family:'Liberation Sans', sans-serif;text-align:center;width:12px;transform:none;">K</div>
<div class="t" style="left:2006.80px;top:352.70px;font-size:20.78px;line-height:20.78px;color:#444;transform:scaleX(1.0000);font-family:'Liberation Sans', sans-serif;text-align:center;width:12px;transform:none;">L</div>
<div class="t" style="left:2110.30px;top:352.70px;font-size:20.78px;line-height:20.78px;color:#444;transform:scaleX(1.0000);font-family:'Liberation Sans', sans-serif;text-align:center;width:12px;transform:none;">M</div>
<div class="t" style="left:1063.47px;top:352.45px;font-size:21.08px;line-height:21.08px;color:#107c41;font-weight:700;transform:scaleX(1.0836);font-family:'Liberation Sans', sans-serif;">D</div>
<div class="b" style="left:294.4px;top:379px;width:1.0px;height:771px;background:#dadada;"></div>
<div class="b" style="left:634.4px;top:379px;width:1.0px;height:771px;background:#dadada;"></div>
<div class="b" style="left:924px;top:379px;width:1px;height:771px;background:#dadada;"></div>
<div class="b" style="left:1221px;top:379px;width:1px;height:771px;background:#dadada;"></div>
<div class="b" style="left:1749.5px;top:379px;width:1.0px;height:771px;background:#dadada;"></div>
<div class="b" style="left:1855.6px;top:379px;width:1.0px;height:771px;background:#dadada;"></div>
<div class="b" style="left:1961px;top:379px;width:1px;height:771px;background:#dadada;"></div>
<div class="b" style="left:2066.5px;top:379px;width:1.0px;height:771px;background:#dadada;"></div>
<div class="b" style="left:53px;top:460px;width:2076px;height:1px;background:#dadada;"></div>
<div class="b" style="left:0px;top:460px;width:53px;height:1px;background:#dadada;"></div>
<div class="b" style="left:53px;top:513px;width:2076px;height:1px;background:#dadada;"></div>
<div class="b" style="left:0px;top:513px;width:53px;height:1px;background:#dadada;"></div>
<div class="b" style="left:53px;top:546px;width:2076px;height:1px;background:#dadada;"></div>
<div class="b" style="left:0px;top:546px;width:53px;height:1px;background:#dadada;"></div>
<div class="b" style="left:53px;top:579px;width:2076px;height:1px;background:#dadada;"></div>
<div class="b" style="left:0px;top:579px;width:53px;height:1px;background:#dadada;"></div>
<div class="b" style="left:53px;top:612px;width:2076px;height:1px;background:#dadada;"></div>
<div class="b" style="left:0px;top:612px;width:53px;height:1px;background:#dadada;"></div>
<div class="b" style="left:53px;top:645px;width:2076px;height:1px;background:#dadada;"></div>
<div class="b" style="left:0px;top:645px;width:53px;height:1px;background:#dadada;"></div>
<div class="b" style="left:53px;top:678px;width:2076px;height:1px;background:#dadada;"></div>
<div class="b" style="left:0px;top:678px;width:53px;height:1px;background:#dadada;"></div>
<div class="b" style="left:53px;top:711px;width:2076px;height:1px;background:#dadada;"></div>
<div class="b" style="left:0px;top:711px;width:53px;height:1px;background:#dadada;"></div>
<div class="b" style="left:53px;top:744px;width:2076px;height:1px;background:#dadada;"></div>
<div class="b" style="left:0px;top:744px;width:53px;height:1px;background:#dadada;"></div>
<div class="b" style="left:53px;top:777px;width:2076px;height:1px;background:#dadada;"></div>
<div class="b" style="left:0px;top:777px;width:53px;height:1px;background:#dadada;"></div>
<div class="b" style="left:53px;top:810px;width:2076px;height:1px;background:#dadada;"></div>
<div class="b" style="left:0px;top:810px;width:53px;height:1px;background:#dadada;"></div>
<div class="b" style="left:53px;top:843px;width:2076px;height:1px;background:#dadada;"></div>
<div class="b" style="left:0px;top:843px;width:53px;height:1px;background:#dadada;"></div>
<div class="b" style="left:53px;top:876px;width:2076px;height:1px;background:#dadada;"></div>
<div class="b" style="left:0px;top:876px;width:53px;height:1px;background:#dadada;"></div>
<div class="b" style="left:53px;top:909px;width:2076px;height:1px;background:#dadada;"></div>
<div class="b" style="left:0px;top:909px;width:53px;height:1px;background:#dadada;"></div>
<div class="b" style="left:53px;top:942px;width:2076px;height:1px;background:#dadada;"></div>
<div class="b" style="left:0px;top:942px;width:53px;height:1px;background:#dadada;"></div>
<div class="b" style="left:53px;top:975px;width:2076px;height:1px;background:#dadada;"></div>
<div class="b" style="left:0px;top:975px;width:53px;height:1px;background:#dadada;"></div>
<div class="b" style="left:53px;top:1008px;width:2076px;height:1px;background:#dadada;"></div>
<div class="b" style="left:0px;top:1008px;width:53px;height:1px;background:#dadada;"></div>
<div class="b" style="left:53px;top:1041px;width:2076px;height:1px;background:#dadada;"></div>
<div class="b" style="left:0px;top:1041px;width:53px;height:1px;background:#dadada;"></div>
<div class="b" style="left:53px;top:1074px;width:2076px;height:1px;background:#dadada;"></div>
<div class="b" style="left:0px;top:1074px;width:53px;height:1px;background:#dadada;"></div>
<div class="b" style="left:53px;top:1107px;width:2076px;height:1px;background:#dadada;"></div>
<div class="b" style="left:0px;top:1107px;width:53px;height:1px;background:#dadada;"></div>
<div class="b" style="left:53px;top:1140px;width:2076px;height:1px;background:#dadada;"></div>
<div class="b" style="left:0px;top:1140px;width:53px;height:1px;background:#dadada;"></div>
<div class="b" style="left:53px;top:1173px;width:2076px;height:1px;background:#dadada;"></div>
<div class="b" style="left:0px;top:1173px;width:53px;height:1px;background:#dadada;"></div>
<div class="b" style="left:0px;top:544.5px;width:53px;height:1.0px;background:#c8c8c8;"></div>
<div class="b" style="left:0px;top:546.5px;width:53px;height:1.0px;background:#c8c8c8;"></div>
<div class="b" style="left:0px;top:577.5px;width:53px;height:1.0px;background:#c8c8c8;"></div>
<div class="b" style="left:0px;top:579.5px;width:53px;height:1.0px;background:#c8c8c8;"></div>
<div class="b" style="left:0px;top:610.5px;width:53px;height:1.0px;background:#c8c8c8;"></div>
<div class="b" style="left:0px;top:612.5px;width:53px;height:1.0px;background:#c8c8c8;"></div>
<div class="b" style="left:0px;top:513px;width:52px;height:33px;background:#e1e1e1;"></div>
<div class="b" style="left:51px;top:513px;width:3px;height:33px;background:#107c41;"></div>
<div class="t" style="left:0px;width:43px;text-align:center;top:433.91px;font-size:20.78px;line-height:20.78px;color:#444;">1</div>
<div class="t" style="left:0px;width:43px;text-align:center;top:486.71px;font-size:20.78px;line-height:20.78px;color:#444;">2</div>
<div class="t" style="left:0px;width:43px;text-align:center;top:518.01px;font-size:20.78px;line-height:20.78px;color:#107c41;font-weight:700;">3</div>
<div class="t" style="left:0px;width:43px;text-align:center;top:552.61px;font-size:20.78px;line-height:20.78px;color:#444;">5</div>
<div class="t" style="left:0px;width:43px;text-align:center;top:585.61px;font-size:20.78px;line-height:20.78px;color:#444;">9</div>
<div class="t" style="left:0px;width:43px;text-align:center;top:618.61px;font-size:20.78px;line-height:20.78px;color:#444;">13</div>
<div class="t" style="left:0px;width:43px;text-align:center;top:651.61px;font-size:20.78px;line-height:20.78px;color:#444;">14</div>
<div class="t" style="left:0px;width:43px;text-align:center;top:684.61px;font-size:20.78px;line-height:20.78px;color:#444;">15</div>
<div class="t" style="left:0px;width:43px;text-align:center;top:717.61px;font-size:20.78px;line-height:20.78px;color:#444;">16</div>
<div class="t" style="left:0px;width:43px;text-align:center;top:750.61px;font-size:20.78px;line-height:20.78px;color:#444;">17</div>
<div class="t" style="left:0px;width:43px;text-align:center;top:783.61px;font-size:20.78px;line-height:20.78px;color:#444;">18</div>
<div class="t" style="left:0px;width:43px;text-align:center;top:816.61px;font-size:20.78px;line-height:20.78px;color:#444;">19</div>
<div class="t" style="left:0px;width:43px;text-align:center;top:849.61px;font-size:20.78px;line-height:20.78px;color:#444;">20</div>
<div class="t" style="left:0px;width:43px;text-align:center;top:882.61px;font-size:20.78px;line-height:20.78px;color:#444;">21</div>
<div class="t" style="left:0px;width:43px;text-align:center;top:915.61px;font-size:20.78px;line-height:20.78px;color:#444;">22</div>
<div class="t" style="left:0px;width:43px;text-align:center;top:948.61px;font-size:20.78px;line-height:20.78px;color:#444;">23</div>
<div class="t" style="left:0px;width:43px;text-align:center;top:981.61px;font-size:20.78px;line-height:20.78px;color:#444;">24</div>
<div class="t" style="left:0px;width:43px;text-align:center;top:1014.61px;font-size:20.78px;line-height:20.78px;color:#444;">25</div>
<div class="t" style="left:0px;width:43px;text-align:center;top:1047.61px;font-size:20.78px;line-height:20.78px;color:#444;">26</div>
<div class="t" style="left:0px;width:43px;text-align:center;top:1080.61px;font-size:20.78px;line-height:20.78px;color:#444;">27</div>
<div class="t" style="left:0px;width:43px;text-align:center;top:1113.61px;font-size:20.78px;line-height:20.78px;color:#444;">28</div>
<div class="b" style="left:53.6px;top:380px;width:1167.4px;height:79px;background:#2f4e8e;"></div>
<div class="b" style="left:53.6px;top:459px;width:1167.4px;height:2px;background:#8ea9db;"></div>
<div class="b" style="left:53.6px;top:461px;width:1167.4px;height:51px;background:#4472c4;"></div>
<div class="b" style="left:53.6px;top:512px;width:1167.4px;height:2px;background:#8ea9db;"></div>
<div class="b" style="left:53.6px;top:514px;width:1167.4px;height:31px;background:#d9e1f2;"></div>
<div class="b" style="left:53.6px;top:545px;width:1167.4px;height:2px;background:#8ea9db;"></div>
<div class="b" style="left:53.6px;top:547px;width:1167.4px;height:31px;background:#ffffff;"></div>
<div class="b" style="left:53.6px;top:578px;width:1167.4px;height:2px;background:#8ea9db;"></div>
<div class="b" style="left:53.6px;top:580px;width:1167.4px;height:31px;background:#d9e1f2;"></div>
<div class="b" style="left:53.6px;top:611px;width:1167.4px;height:2px;background:#8ea9db;"></div>
<div class="b" style="left:53.6px;top:613px;width:1167.4px;height:31px;background:#ffffff;"></div>
<div class="b" style="left:53.6px;top:644px;width:1167.4px;height:2px;background:#8ea9db;"></div>
<div class="b" style="left:294.4px;top:547px;width:1.0px;height:31px;background:#dadada;"></div>
<div class="b" style="left:634.4px;top:547px;width:1.0px;height:31px;background:#dadada;"></div>
<div class="b" style="left:924px;top:547px;width:1px;height:31px;background:#dadada;"></div>
<div class="b" style="left:294.4px;top:613px;width:1.0px;height:31px;background:#dadada;"></div>
<div class="b" style="left:634.4px;top:613px;width:1.0px;height:31px;background:#dadada;"></div>
<div class="b" style="left:924px;top:613px;width:1px;height:31px;background:#dadada;"></div>
<div class="t" style="left:461.73px;top:406.16px;font-size:29.80px;line-height:29.80px;color:#fff;font-weight:700;transform:scaleX(0.9360);font-family:'Liberation Sans', sans-serif;">INFORMAZIONI IMPIEGATI</div>
<div class="t" style="left:139.45px;top:476.07px;font-size:24.71px;line-height:24.71px;color:#fff;font-weight:700;transform:scaleX(0.9342);font-family:'Liberation Sans', sans-serif;">NOME</div>
<div class="t" style="left:363.52px;top:476.07px;font-size:24.71px;line-height:24.71px;color:#fff;font-weight:700;transform:scaleX(0.8915);font-family:'Liberation Sans', sans-serif;">DATA ASSUNZIONE</div>
<div class="t" style="left:758.27px;top:476.07px;font-size:24.71px;line-height:24.71px;color:#fff;font-weight:700;transform:scaleX(0.8637);font-family:'Liberation Sans', sans-serif;">ETÀ</div>
<div class="t" style="left:1025.79px;top:476.07px;font-size:24.71px;line-height:24.71px;color:#fff;font-weight:700;transform:scaleX(0.8580);font-family:'Liberation Sans', sans-serif;">SALARIO</div>
<div class="b" style="left:263.5px;top:473.6px;width:26.600000000000023px;height:26.799999999999955px;background:#fff;border-radius:2.5px;box-shadow:0 0 0 0.6px rgba(90,80,70,0.55);"></div><svg class="b" style="left:263.5px;top:474px;" width="27" height="26" viewBox="0 0 27 26"><path d="M4.6 15.2 L7.8 19.4 L12.2 15.2" stroke="#111" stroke-width="1.25" fill="none"/><path d="M19 6.2 V19.6 M17.3 7.9 L19 6.3 L20.7 7.9" stroke="#111" stroke-width="1.3" fill="none"/></svg>
<div class="b" style="left:603.6px;top:473.6px;width:26.600000000000023px;height:26.799999999999955px;background:#fff;border-radius:2.5px;box-shadow:0 0 0 0.6px rgba(90,80,70,0.55);"></div><svg class="b" style="left:603.6px;top:474px;" width="27" height="26" viewBox="0 0 27 26"><path d="M4.6 15.2 L7.8 19.4 L12.2 15.2" stroke="#111" stroke-width="1.25" fill="none"/><path d="M14.2 5.6 H23.8 Q24.2 5.6 24.2 6.2 V8 Q24.2 8.8 22.5 9.5 Q20.3 10.3 20 11.3 V17 Q20 17.6 19.4 17.6 H17.4 Q16.8 17.6 16.8 17 V11.3 Q16.5 10.3 14.4 9.5 Q13.8 9.1 13.8 8 V6.2 Q13.8 5.6 14.2 5.6 Z" stroke="#111" stroke-width="1.3" fill="none"/></svg>
<div class="b" style="left:893.5px;top:473.6px;width:26.600000000000023px;height:26.799999999999955px;background:#fff;border-radius:2.5px;box-shadow:0 0 0 0.6px rgba(90,80,70,0.55);"></div><svg class="b" style="left:893.5px;top:474px;" width="27" height="26" viewBox="0 0 27 26"><path d="M7.8 10.3 L13.9 15.4 L19.2 10.3" stroke="#111" stroke-width="1.25" fill="none"/></svg>
<div class="b" style="left:1190.3px;top:473.6px;width:26.59999999999991px;height:26.799999999999955px;background:#fff;border-radius:2.5px;box-shadow:0 0 0 0.6px rgba(90,80,70,0.55);"></div><svg class="b" style="left:1190.3px;top:474px;" width="27" height="26" viewBox="0 0 27 26"><path d="M4.6 15.2 L7.8 19.4 L12.2 15.2" stroke="#111" stroke-width="1.25" fill="none"/><path d="M14.2 5.6 H23.8 Q24.2 5.6 24.2 6.2 V8 Q24.2 8.8 22.5 9.5 Q20.3 10.3 20 11.3 V17 Q20 17.6 19.4 17.6 H17.4 Q16.8 17.6 16.8 17 V11.3 Q16.5 10.3 14.4 9.5 Q13.8 9.1 13.8 8 V6.2 Q13.8 5.6 14.2 5.6 Z" stroke="#111" stroke-width="1.3" fill="none"/></svg>
<div class="t" style="left:57.76px;top:519.53px;font-size:21.80px;line-height:21.80px;color:#000;transform:scaleX(0.9915);font-family:'Liberation Sans', sans-serif;">Alessandro</div>
<div class="t" style="left:512.33px;top:519.53px;font-size:21.80px;line-height:21.80px;color:#000;transform:scaleX(1.0764);font-family:'Liberation Sans', sans-serif;">21/09/2014</div>
<div class="t" style="left:894.79px;top:519.53px;font-size:21.80px;line-height:21.80px;color:#000;transform:scaleX(1.0222);font-family:'Liberation Sans', sans-serif;">20</div>
<div class="t" style="left:1100.32px;top:519.53px;font-size:21.80px;line-height:21.80px;color:#000;transform:scaleX(1.0113);font-family:'Liberation Sans', sans-serif;">18.000,00 €</div>
<div class="t" style="left:55.95px;top:552.53px;font-size:21.80px;line-height:21.80px;color:#000;transform:scaleX(1.0321);font-family:'Liberation Sans', sans-serif;">Beatrice</div>
<div class="t" style="left:512.32px;top:552.53px;font-size:21.80px;line-height:21.80px;color:#000;transform:scaleX(1.0797);font-family:'Liberation Sans', sans-serif;">26/04/2016</div>
<div class="t" style="left:894.78px;top:552.53px;font-size:21.80px;line-height:21.80px;color:#000;transform:scaleX(1.0303);font-family:'Liberation Sans', sans-serif;">29</div>
<div class="t" style="left:1100.90px;top:552.53px;font-size:21.80px;line-height:21.80px;color:#000;transform:scaleX(1.0063);font-family:'Liberation Sans', sans-serif;">27.000,00 €</div>
<div class="t" style="left:55.96px;top:585.53px;font-size:21.80px;line-height:21.80px;color:#000;transform:scaleX(1.0276);font-family:'Liberation Sans', sans-serif;">Luigi</div>
<div class="t" style="left:512.58px;top:585.53px;font-size:21.80px;line-height:21.80px;color:#000;transform:scaleX(1.0779);font-family:'Liberation Sans', sans-serif;">01/05/2019</div>
<div class="t" style="left:894.78px;top:585.53px;font-size:21.80px;line-height:21.80px;color:#000;transform:scaleX(1.0253);font-family:'Liberation Sans', sans-serif;">25</div>
<div class="t" style="left:1100.90px;top:585.53px;font-size:21.80px;line-height:21.80px;color:#000;transform:scaleX(1.0063);font-family:'Liberation Sans', sans-serif;">21.000,00 €</div>
<div class="t" style="left:56.83px;top:618.53px;font-size:21.80px;line-height:21.80px;color:#000;transform:scaleX(0.9633);font-family:'Liberation Sans', sans-serif;">Sofia</div>
<div class="t" style="left:512.58px;top:618.53px;font-size:21.80px;line-height:21.80px;color:#000;transform:scaleX(1.0783);font-family:'Liberation Sans', sans-serif;">07/08/2001</div>
<div class="t" style="left:894.78px;top:618.53px;font-size:21.80px;line-height:21.80px;color:#000;transform:scaleX(1.0263);font-family:'Liberation Sans', sans-serif;">28</div>
<div class="t" style="left:1100.90px;top:618.53px;font-size:21.80px;line-height:21.80px;color:#000;transform:scaleX(1.0063);font-family:'Liberation Sans', sans-serif;">26.000,00 €</div>
<div class="b" style="left:51px;top:513px;width:3px;height:33px;background:#107c41;"></div>
<div class="b" style="left:921.5px;top:511.5px;width:299.5px;height:35.5px;background:transparent;border:2.5px solid #107c41;box-sizing:border-box;"></div>
<div class="b" style="left:1211.5px;top:636px;width:9.0px;height:9px;background:#1f3864;"></div>
<div class="b" style="left:2129px;top:379px;width:24px;height:771px;background:#e6e6e6;"></div>
<div class="b" style="left:2129px;top:380px;width:24px;height:25px;background:#fff;border:1px solid #c8c8c8;box-sizing:border-box;"></div>
<svg class="b" style="left:2129px;top:379.5px;" width="24" height="24" viewBox="0 0 24 24"><path d="M6.5 15 L12 9.5 L17.5 15 Z" fill="#707070"/></svg>
<div class="b" style="left:2129px;top:404px;width:24px;height:289px;background:#fff;border:1px solid #c8c8c8;box-sizing:border-box;"></div>
<div class="b" style="left:2129px;top:1126px;width:24px;height:24px;background:#fff;border:1px solid #c8c8c8;box-sizing:border-box;"></div>
<svg class="b" style="left:2129px;top:1126px;" width="24" height="24" viewBox="0 0 24 24"><path d="M6.5 9.5 L12 15 L17.5 9.5 Z" fill="#707070"/></svg>
<div class="b" style="left:0px;top:1150px;width:2153px;height:24px;background:#f3f3f3;"></div>
<div class="b" style="left:54.5px;top:1150px;width:2074.5px;height:24px;background:#e6e6e6;"></div>
<div class="b" style="left:53.8px;top:1150px;width:25.200000000000003px;height:24px;background:#fff;border:1px solid #c8c8c8;box-sizing:border-box;"></div>
<svg class="b" style="left:54px;top:1150px;" width="24" height="24" viewBox="0 0 24 24"><path d="M14.5 6.5 L9 12 L14.5 17.5 Z" fill="#707070"/></svg>
<div class="b" style="left:78px;top:1150px;width:594.5px;height:24px;background:#fff;border:1px solid #c8c8c8;box-sizing:border-box;"></div>
<div class="b" style="left:2104px;top:1150px;width:24.5px;height:24px;background:#fff;border:1px solid #c8c8c8;box-sizing:border-box;"></div>
<svg class="b" style="left:2104px;top:1150px;" width="24" height="24" viewBox="0 0 24 24"><path d="M9.5 6.5 L15 12 L9.5 17.5 Z" fill="#707070"/></svg>
<div class="b" style="left:0px;top:1174px;width:2153px;height:53px;background:#f3f3f3;"></div>
<svg class="b" style="left:8px;top:1186px;" width="22" height="26" viewBox="0 0 22 26"><path d="M14.3 5 L6.4 13 L14.3 21" stroke="#a8a8a8" stroke-width="1.5" fill="none"/></svg>
<svg class="b" style="left:61px;top:1186px;" width="22" height="26" viewBox="0 0 22 26"><path d="M7.4 5 L15.3 13 L7.4 21" stroke="#a8a8a8" stroke-width="1.5" fill="none"/></svg>
<svg class="b" style="left:112px;top:1188px;" width="26" height="22" viewBox="0 0 26 22"><path d="M3 4.5 H23 M3 11 H23 M3 17.5 H23" stroke="#424242" stroke-width="1.6"/></svg>
<div class="t" style="left:169.19px;top:1188.16px;font-size:22.24px;line-height:22.24px;color:#3c3c3c;font-weight:700;transform:scaleX(0.9474);font-family:'Liberation Sans', sans-serif;">Foglio1</div>
<div class="b" style="left:166px;top:1223px;width:81px;height:4px;background:#1e7145;"></div>
<svg class="b" style="left:274px;top:1186px;" width="26" height="26" viewBox="0 0 26 26"><path d="M13 3 V23 M3 13 H23" stroke="#424242" stroke-width="1.7"/></svg>
<div class="b" style="left:0px;top:1227px;width:2153px;height:36px;background:#ffffff;"></div>
<div class="b" style="left:0px;top:1227px;width:2153px;height:1px;background:#e1e1e1;"></div>
<div class="t" style="left:14.33px;top:1237.63px;font-size:19.33px;line-height:19.33px;color:#424242;transform:scaleX(1.0517);font-family:'Liberation Sans', sans-serif;">Modalità di calcolo: Automatico</div>
<div class="t" style="left:320.80px;top:1237.63px;font-size:19.33px;line-height:19.33px;color:#424242;transform:scaleX(1.0158);font-family:'Liberation Sans', sans-serif;">Statistiche cartella di lavoro</div>
<div class="t" style="left:1719.67px;top:1237.63px;font-size:19.33px;line-height:19.33px;color:#424242;transform:scaleX(1.0262);font-family:'Liberation Sans', sans-serif;">Invia feedback a Microsoft</div>
<div class="b" style="left:2017px;top:1245px;width:18px;height:1.7999999999999545px;background:#424242;"></div>
<div class="t" style="left:2048.02px;top:1238.63px;font-size:19.33px;line-height:19.33px;color:#424242;transform:scaleX(1.0046);font-family:'Liberation Sans', sans-serif;">100%</div>
<svg class="b" style="left:2104px;top:1235px;" width="24" height="24" viewBox="0 0 24 24"><path d="M12 2.2 V20.2 M3 10.8 H21" stroke="#424242" stroke-width="1.8"/></svg>
<div class="b" style="left:1221px;top:348px;width:444px;height:903px;background:#fff;box-shadow:0 0 6px rgba(0,0,0,0.2),0 4px 14px rgba(0,0,0,0.12);border-radius:2px;"></div>
<svg class="b" style="left:1236px;top:365px;" width="36" height="34" viewBox="0 0 36 34"><g transform="translate(11,0) scale(0.9,1)"><text x="0" y="13.7" font-family="Liberation Sans" font-size="19" fill="#1e88d4" text-anchor="middle">A</text><text x="0" y="30.5" font-family="Liberation Sans" font-size="19" fill="#3a3a3a" text-anchor="middle">Z</text></g><path d="M25.8 0.4 V29.5 M20.4 23.7 L25.8 29.5 L31.2 23.7" stroke="#3a3a3a" stroke-width="1.6" fill="none"/></svg>
<div class="t" style="left:1286.90px;top:370.79px;font-size:22.67px;line-height:22.67px;color:#242424;transform:scaleX(1.0300);font-family:'Liberation Sans', sans-serif;">Ordina dal più piccolo al più grande</div>
<svg class="b" style="left:1236px;top:421px;" width="36" height="34" viewBox="0 0 36 34"><g transform="translate(11,0) scale(0.9,1)"><text x="0" y="13.7" font-family="Liberation Sans" font-size="19" fill="#3a3a3a" text-anchor="middle">Z</text><text x="0" y="30.5" font-family="Liberation Sans" font-size="19" fill="#1e88d4" text-anchor="middle">A</text></g><path d="M25.8 0.4 V29.5 M20.4 23.7 L25.8 29.5 L31.2 23.7" stroke="#3a3a3a" stroke-width="1.6" fill="none"/></svg>
<div class="t" style="left:1286.90px;top:426.79px;font-size:22.67px;line-height:22.67px;color:#242424;transform:scaleX(1.0299);font-family:'Liberation Sans', sans-serif;">Ordina dal più grande al più piccolo</div>
<div class="t" style="left:1286.90px;top:482.79px;font-size:22.67px;line-height:22.67px;color:#242424;transform:scaleX(1.0282);font-family:'Liberation Sans', sans-serif;">Ordina per colore</div>
<svg class="b" style="left:1630px;top:481px;" width="18" height="24" viewBox="0 0 18 24"><path d="M3.5 1.3 L13.6 11.4 L3.5 21.3" stroke="#333" stroke-width="2" fill="none"/></svg>
<svg class="b" style="left:1236px;top:530px;" width="36" height="36" viewBox="0 0 36 36"><rect x="3.7" y="4" width="29.4" height="28.7" fill="#fafafa" stroke="#3a3a3a" stroke-width="1.7"/><rect x="4.5" y="4.8" width="27.8" height="4.6" fill="#b4b4b4"/><path d="M12.7 11.6 V27.6 M7.7 22.6 L12.7 27.6 L17.7 22.6" stroke="#1e88d4" stroke-width="1.7" fill="none"/><path d="M23.8 28.3 V12.3 M18.8 17.3 L23.8 12.3 L28.8 17.3" stroke="#3a3a3a" stroke-width="1.7" fill="none"/></svg>
<div class="t" style="left:1286.91px;top:538.79px;font-size:22.67px;line-height:22.67px;color:#242424;transform:scaleX(1.0228);font-family:'Liberation Sans', sans-serif;">Ordinamento personalizzato</div>
<div class="b" style="left:1235px;top:578.5px;width:416px;height:2.0px;background:#e1dfdd;"></div>
<svg class="b" style="left:1236px;top:596px;" width="36" height="28" viewBox="0 0 36 28"><path d="M4 14 Q18 1 32 14 Q18 27 4 14 Z" stroke="#3a3a3a" stroke-width="1.7" fill="none"/><circle cx="18" cy="14" r="4.6" fill="none" stroke="#3a3a3a" stroke-width="1.7"/><circle cx="18" cy="14" r="1.8" fill="#3a3a3a"/></svg>
<div class="t" style="left:1287.89px;top:600.09px;font-size:22.67px;line-height:22.67px;color:#242424;transform:scaleX(1.0078);font-family:'Liberation Sans', sans-serif;">Visualizzazione foglio</div>
<svg class="b" style="left:1630px;top:598px;" width="18" height="24" viewBox="0 0 18 24"><path d="M3.5 1.3 L13.6 11.4 L3.5 21.3" stroke="#333" stroke-width="2" fill="none"/></svg>
<div class="b" style="left:1222px;top:644px;width:442px;height:113px;background:#edebe9;"></div>
<div class="b" style="left:1235px;top:640px;width:416px;height:2px;background:#e1dfdd;"></div>
<svg class="b" style="left:1234px;top:652px;" width="42" height="42" viewBox="0 0 42 42"><path d="M6 6.3 H33.4 V10.5 L22 21.5 V34.4 H16.5 V21.3 L6 10.5 Z" fill="#f8f8f8"/><path d="M17.5 34.4 H16.5 V21.3 L6 10.5 V6.3 H33.4 V10.5 L24.4 19.2" stroke="#3a3a3a" stroke-width="1.7" fill="none" stroke-linejoin="miter"/><path d="M21 21.3 L36.5 36.5 M36.5 21.3 L21 36.5" stroke="#e8363b" stroke-width="1.7"/></svg>
<div class="t" style="left:1286.86px;top:661.79px;font-size:22.67px;line-height:22.67px;color:#242424;transform:scaleX(0.9898);font-family:'Liberation Sans', sans-serif;">Cancella filtro da 'SALARIO'</div>
<div class="t" style="left:1286.06px;top:718.19px;font-size:22.67px;line-height:22.67px;color:#242424;transform:scaleX(1.0447);font-family:'Liberation Sans', sans-serif;">Filtri per numeri</div>
<svg class="b" style="left:1630px;top:717px;" width="18" height="24" viewBox="0 0 18 24"><path d="M3.5 1.3 L13.6 11.4 L3.5 21.3" stroke="#333" stroke-width="2" fill="none"/></svg>
<div class="b" style="left:1226px;top:633px;width:436px;height:79px;background:transparent;border:5.5px solid #ee0000;box-sizing:border-box;"></div>
<div class="b" style="left:1276px;top:759px;width:370px;height:1.5px;background:#e1dfdd;"></div>
<div class="b" style="left:1276px;top:767.5px;width:371px;height:50.5px;background:#fff;border:1px solid #8a8886;border-radius:4px;box-sizing:border-box;"></div>
<svg class="b" style="left:1288px;top:780px;" width="28" height="28" viewBox="0 0 28 28"><circle cx="16.5" cy="10.5" r="6.8" stroke="#424242" stroke-width="1.5" fill="none"/><path d="M11.5 15.5 L3.5 23.5" stroke="#424242" stroke-width="1.6"/></svg>
<div class="t" style="left:1325.71px;top:783.29px;font-size:22.09px;line-height:22.09px;color:#707070;transform:scaleX(0.9672);font-family:'Liberation Sans', sans-serif;">Cerca</div>
<div class="b" style="left:1285px;top:846.8px;width:26.5px;height:25.5px;background:#fff;border:1.3px solid #7a7a7a;border-radius:2.5px;box-sizing:border-box;"></div>
<div class="t" style="left:1325.73px;top:850.49px;font-size:22.09px;line-height:22.09px;color:#242424;transform:scaleX(1.0484);font-family:'Liberation Sans', sans-serif;">Seleziona tutto</div>
<div class="b" style="left:1285px;top:892.8499999999999px;width:26.5px;height:25.5px;background:#fff;border:1.3px solid #7a7a7a;border-radius:2.5px;box-sizing:border-box;"></div>
<div class="t" style="left:1325.11px;top:896.54px;font-size:22.09px;line-height:22.09px;color:#242424;transform:scaleX(1.0041);font-family:'Liberation Sans', sans-serif;">18.000,00 €</div>
<div class="b" style="left:1285px;top:938.9px;width:26.5px;height:25.5px;background:#fff;border:1.3px solid #7a7a7a;border-radius:2.5px;box-sizing:border-box;"></div>
<div class="t" style="left:1325.70px;top:942.59px;font-size:22.09px;line-height:22.09px;color:#242424;transform:scaleX(0.9991);font-family:'Liberation Sans', sans-serif;">21.000,00 €</div>
<div class="b" style="left:1285px;top:984.9499999999999px;width:26.5px;height:25.5px;background:#fff;border:1.3px solid #7a7a7a;border-radius:2.5px;box-sizing:border-box;"></div>
<div class="t" style="left:1325.70px;top:988.64px;font-size:22.09px;line-height:22.09px;color:#242424;transform:scaleX(0.9991);font-family:'Liberation Sans', sans-serif;">26.000,00 €</div>
<div class="b" style="left:1285px;top:1031.0px;width:26.5px;height:25.5px;background:#fff;border:1.3px solid #7a7a7a;border-radius:2.5px;box-sizing:border-box;"></div>
<div class="t" style="left:1325.70px;top:1034.69px;font-size:22.09px;line-height:22.09px;color:#242424;transform:scaleX(0.9991);font-family:'Liberation Sans', sans-serif;">27.000,00 €</div>
<div class="b" style="left:1285px;top:1077.05px;width:26.5px;height:25.5px;background:#fff;border:1.3px solid #7a7a7a;border-radius:2.5px;box-sizing:border-box;"></div>
<div class="t" style="left:1325.96px;top:1080.74px;font-size:22.09px;line-height:22.09px;color:#242424;transform:scaleX(0.9968);font-family:'Liberation Sans', sans-serif;">33.000,00 €</div>
<div class="b" style="left:1285px;top:1123.1px;width:26.5px;height:25.5px;background:#fff;border:1.3px solid #7a7a7a;border-radius:2.5px;box-sizing:border-box;"></div>
<div class="t" style="left:1325.96px;top:1126.79px;font-size:22.09px;line-height:22.09px;color:#242424;transform:scaleX(0.9968);font-family:'Liberation Sans', sans-serif;">35.000,00 €</div>
<div class="b" style="left:1637.5px;top:843.5px;width:9.0px;height:191.5px;background:#e3e3e3;border-radius:5px;"></div>
<div class="b" style="left:1276px;top:1181px;width:154.5px;height:52.5px;background:#217346;border-radius:3px;"></div>
<div class="t" style="left:1313.86px;top:1199.29px;font-size:22.09px;line-height:22.09px;color:#fff;font-weight:700;transform:scaleX(0.9773);font-family:'Liberation Sans', sans-serif;">Applica</div>
<svg class="b" style="left:1150px;top:430px;" width="110" height="115" viewBox="0 0 110 115"><ellipse cx="53.4" cy="56" rx="36" ry="40.3" stroke="#ee0000" stroke-width="5" fill="none"/></svg>
</body></html>
